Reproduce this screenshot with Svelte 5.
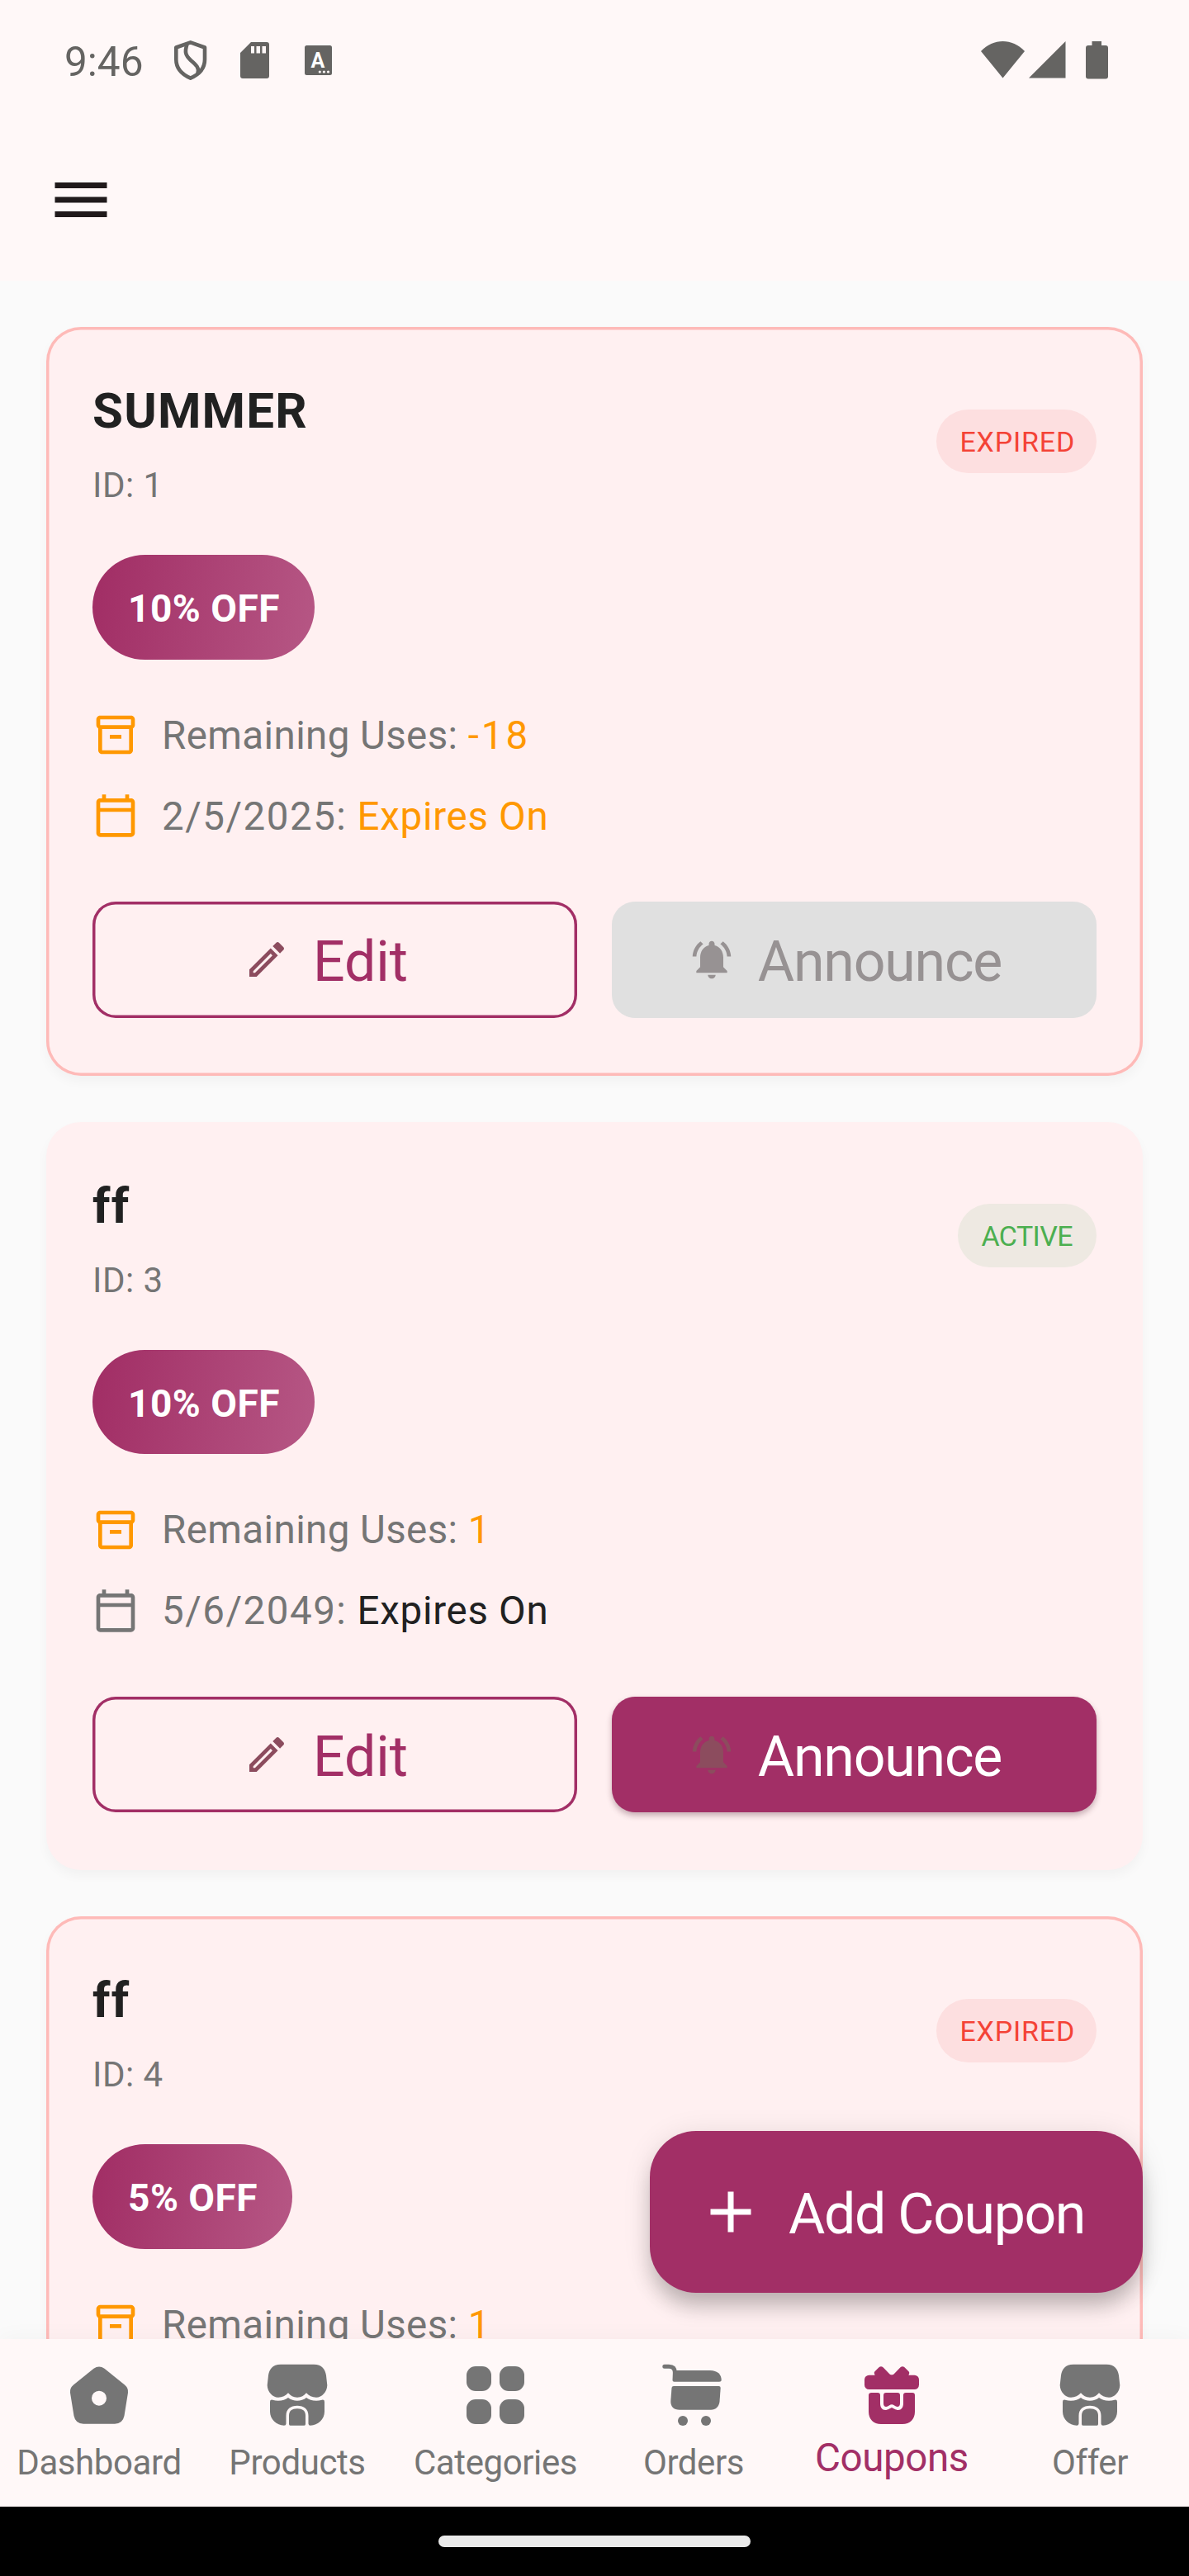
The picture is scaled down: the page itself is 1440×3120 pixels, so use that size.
<script>
  const coupons = [
    { code: 'SUMMER', id: 1, discount: 10, uses: '-18', date: '2/5/2025', expired: true },
    { code: 'ff', id: 3, discount: 10, uses: '1', date: '5/6/2049', expired: false },
    { code: 'ff', id: 4, discount: 5, uses: '1', date: '5/6/2049', expired: true },
  ];
  const tabs = ['Dashboard', 'Products', 'Categories', 'Orders', 'Coupons', 'Offer'];
  const current = 'Coupons';
</script>

{#snippet store()}
  <path d="M22 4.7H62C72 4.7 76 11 77 18L78.3 30C78 38 72 44.7 65 44.7C60 44.7 56 42.8 53 39.3C50 42.8 47 44.7 42 44.7S34 42.8 31 39.3C28 42.8 24 44.7 19 44.7C12 44.7 6 38 5.7 30L7 18C8 11 12 4.7 22 4.7Z" />
  <path d="M9 50Q9 47.2 12 47.7C20 50 27 48 31 45C37 50 47 50 53 45C57 48 64 50 72 47.7Q75 47.2 75 50V62C75 71 67 78.7 58 78.7Q55.5 78.7 55.5 76.5V67C55.5 58.5 50 54.7 42 54.7S28.5 58.5 28.5 67V76.5Q28.5 78.7 26 78.7C17 78.7 9 71 9 62Z" />
  <path d="M32 77V67C32 61 35.5 58.3 42 58.3S52 61 52 67V77Q52 78.7 50.5 78.7H33.5Q32 78.7 32 77Z" />
{/snippet}

<div class="screen">
  <header class="top">
    <div class="status">
      <span class="time">9:46</span>
      <svg class="shield" viewBox="212 49 40 48">
        <path d="M231.7 51.4L249 57.5V72C249 82 242.5 90 231.7 94.6C221 90 214.3 82 214.3 72V57.5Z" />
        <path d="M227.5 53.5C224.5 63 225.5 67 232 73C239 79 242.5 82 240.5 89" />
      </svg>
      <svg class="sd" viewBox="0 0 35 44">
        <path fill-rule="evenodd" d="M13 0H32Q35 0 35 3V41Q35 44 32 44H3Q0 44 0 41V13ZM13 5V13.5H17V5ZM19.5 5V13.5H24V5ZM26.5 5V13.5H31V5Z" />
      </svg>
      <svg class="lang" viewBox="0 0 33 36">
        <rect width="33" height="36" rx="2.5" />
        <text x="16" y="27" text-anchor="middle">A</text>
        <circle cx="18.3" cy="32" r="1.6" /><circle cx="23.4" cy="32" r="1.6" /><circle cx="28.5" cy="32" r="1.6" />
      </svg>
      <span class="fill"></span>
      <svg class="wifi" viewBox="0 0 53 45"><path d="M26.5 44.5L0 12C15 -4 38 -4 53 12Z" /></svg>
      <svg class="signal" viewBox="0 0 45 45"><path d="M44.5 0V44.5H0Z" /></svg>
      <svg class="battery" viewBox="0 0 27 46"><path d="M7.5 0H19V5H24Q27 5 27 8V42.5Q27 45.5 24 45.5H3Q0 45.5 0 42.5V8Q0 5 3 5H7.5Z" /></svg>
    </div>
    <div class="appbar">
      <svg class="menu" viewBox="0 0 24 24"><path d="M3 18h18v-2H3v2zm0-5h18v-2H3v2zm0-7v2h18V6H3z" /></svg>
    </div>
  </header>

  <main class="list">
    {#each coupons as c (c.id)}
      <article class="card" class:expired={c.expired}>
        <div class="head">
          <div class="names">
            <div class="code">{c.code}</div>
            <div class="id">ID: {c.id}</div>
          </div>
          <span class="badge" class:live={!c.expired}>{c.expired ? 'EXPIRED' : 'ACTIVE'}</span>
        </div>
        <div class="discount">{c.discount}% OFF</div>
        <div class="row">
          <svg class="orange" viewBox="0 0 24 24"><path d="M20 2H4c-1 0-2 .9-2 2v3.01c0 .72.43 1.34 1 1.69V20c0 1.1.9 2 2 2h14c1.1 0 2-.9 2-2V8.7c.57-.35 1-.97 1-1.69V4c0-1.1-1-2-2-2zm-1 18H5V9h14v11zm1-13H4V4h16v3zM9 12h6v2H9z" /></svg>
          <p>Remaining Uses: <b class="orange uses">{c.uses}</b></p>
        </div>
        <div class="row">
          <svg class:orange={c.expired} viewBox="0 0 24 24"><path d="M20 3h-1V1h-2v2H7V1H5v2H4c-1.1 0-2 .9-2 2v16c0 1.1.9 2 2 2h16c1.1 0 2-.9 2-2V5c0-1.1-.9-2-2-2zm0 18H4V10h16v11zm0-13H4V5h16v3z" /></svg>
          <p><span class="date">{c.date}:</span> <b class:orange={c.expired}>Expires On</b></p>
        </div>
        <div class="actions">
          <button class="edit">
            <svg viewBox="0 0 24 24"><path d="M14.06 9.02l.92.92L5.92 19H5v-.92l9.06-9.06M17.66 3c-.25 0-.51.1-.7.29l-1.83 1.83 3.75 3.75 1.83-1.83c.39-.39.39-1.02 0-1.41l-2.34-2.34c-.2-.2-.45-.29-.71-.29zm-3.6 3.19L3 17.25V21h3.75L17.81 9.94l-3.75-3.75z" /></svg>
            <span>Edit</span>
          </button>
          <button class="announce" disabled={c.expired}>
            <svg viewBox="0 0 24 24"><path d="M7.58 4.08L6.15 2.65C3.75 4.48 2.17 7.3 2.03 10.5h2c.15-2.65 1.51-4.97 3.55-6.42zm12.39 6.42h2c-.15-3.2-1.73-6.02-4.12-7.85l-1.42 1.43c2.02 1.45 3.39 3.77 3.54 6.42zM18 11c0-3.07-1.64-5.64-4.5-6.32V4c0-.83-.67-1.5-1.5-1.5s-1.5.67-1.5 1.5v.68C7.63 5.36 6 7.92 6 11v5l-2 2v1h16v-1l-2-2v-5zm-6 11c.14 0 .27-.01.4-.04.65-.14 1.18-.58 1.44-1.18.1-.24.15-.5.15-.78h-4c.01 1.1.9 2 2.01 2z" /></svg>
            <span>Announce</span>
          </button>
        </div>
      </article>
    {/each}
  </main>

  <button class="fab">
    <svg viewBox="0 0 24 24"><path d="M19 13h-6v6h-2v-6H5v-2h6V5h2v6h6v2z" /></svg>
    <span>Add Coupon</span>
  </button>

  <nav class="tabs">
    {#each tabs as t}
      <a class="tab" class:current={t === current} href="#{t}">
        <svg viewBox="0 0 84 84">
          {#if t === 'Dashboard'}
            <path fill-rule="evenodd" d="M35.5 9.8Q42 5.3 48.5 9.8L73 29.5Q77.7 33.5 77 39L72.5 67Q70.5 76.7 61 76.7H23Q13.5 76.7 11.5 67L7 39Q6.3 33.5 11 29.5ZM42 36.7a9 9 0 1 0 0 18a9 9 0 1 0 0-18Z" />
          {:else if t === 'Categories'}
            <rect x="7" y="7" width="30" height="30" rx="11" /><rect x="47" y="7" width="30" height="30" rx="11" />
            <rect x="7" y="47" width="30" height="30" rx="11" /><rect x="47" y="47" width="30" height="30" rx="11" />
          {:else if t === 'Orders'}
            <path class="line" d="M6.8 7.3H12C17 7.3 19.500 10 19.500 15" />
            <path d="M17 12H62C71 12 75.7 17 75.7 23.5Q75.7 25.7 73 25.7H18.5Q16.5 25.7 16.5 24Z" />
            <path d="M18 31H72.5Q74.7 31 74.7 33L73.5 50C72.5 56 69 59.7 63 59.7H25C18 59.7 14 56 14.3 49L15.5 33Q15.7 31 18 31Z" />
            <circle cx="29" cy="73" r="6" /><circle cx="57" cy="73" r="6" />
          {:else if t === 'Coupons'}
            <path d="M22 19L20.8 15.5Q20.5 14.3 21.5 13.3L26.5 8.3Q29 6 31.5 8.3L39.5 16.5Q42 18.7 44.5 16.5L52.5 8.3Q55 6 57.5 8.3L62.5 13.3Q63.5 14.3 63.2 15.5L62 19Z" />
            <rect x="9" y="17.7" width="66" height="17.3" rx="5.5" />
            <path d="M17.5 39H25Q28 39 28 42V52C28 59 33 62 39 58.5L42 57L45 58.5C51 62 56 59 56 52V42Q56 39 59 39H67Q70 39 70 42V62C70 71 64 77 55 77H29C20 77 14 71 14 62V42Q14 39 17.5 39Z" />
            <path d="M35 39H49Q52 39 52 42V52C52 55.5 49.5 57 46.5 55.3L43.5 53.6Q42 53 40.5 53.6L37.5 55.3C34.5 57 32 55.5 32 52V42Q32 39 35 39Z" />
          {:else}
            {@render store()}
          {/if}
        </svg>
        <span>{t}</span>
      </a>
    {/each}
  </nav>
  <div class="gesture"><i></i></div>
</div>

<style>
  :global(body) { margin: 0; }
  .screen {
    position: relative; width: 1440px; height: 3120px; overflow: hidden;
    display: flex; flex-direction: column; background: #fafafa;
    font-family: Roboto, "Noto Sans", sans-serif; color: #757575;
  }
  svg { display: block; flex: none; fill: currentColor; }
  button { font: inherit; border: 0; margin: 0; padding: 0; }

  .top { height: 340px; flex: none; background: #fff8f8; }
  .status {
    height: 145px; padding: 0 98px 0 78px; box-sizing: border-box;
    display: flex; align-items: center; color: #656462;
  }
  .time { width: 133px; font-size: 49.5px; line-height: 60px; padding-top: 4px; }
  .fill { flex: 1; }
  .shield { width: 40px; height: 48px; fill: none; stroke: currentColor; stroke-width: 4.6; stroke-linejoin: round; }
  .sd { width: 35px; height: 44px; margin-left: 40px; }
  .lang { width: 33px; height: 36px; margin-left: 43px; }
  .lang text { font: 700 25px Roboto, sans-serif; fill: #fff; }
  .lang circle { fill: #fff8f8; }
  .wifi { width: 53px; height: 45px; }
  .signal { width: 45px; height: 45px; margin-left: 5px; }
  .battery { width: 27px; height: 46px; margin-left: 24px; }
  .appbar { height: 194px; display: flex; align-items: center; padding: 0 56px; box-sizing: border-box; }
  .menu { width: 84px; height: 84px; color: #201a1b; }

  .list {
    flex: 1; min-height: 0; overflow: hidden; padding: 56px 56px 0;
    display: flex; flex-direction: column; gap: 56px;
  }
  .card {
    flex: none; height: 906.5px; box-sizing: border-box; padding: 56px; border-radius: 42px;
    background: #fff0f1; box-shadow: 0 7px 14px rgba(0, 0, 0, .035);
  }
  .card.expired { box-shadow: inset 0 0 0 3.5px #febab8, 0 7px 14px rgba(0, 0, 0, .035); }
  .head { height: 164px; display: flex; justify-content: space-between; align-items: center; }
  .names { align-self: flex-start; }
  .code { font-size: 60px; line-height: 91px; font-weight: 700; letter-spacing: 1.2px; color: #212121; }
  .id { font-size: 42px; line-height: 71px; padding-top: 9px; letter-spacing: .5px; }
  .badge {
    height: 77px; line-height: 79px; padding: 0 26px 0 28px; border-radius: 39px;
    font-size: 34px; letter-spacing: .8px; color: #f44336; background: #fddfe0;
  }
  .badge.live { color: #4caf50; background: #eee9e2; letter-spacing: -.6px; padding-right: 29px; }
  .discount {
    width: max-content; height: 126.5px; box-sizing: border-box; margin: 56px 0 49.5px;
    padding: 5px 42px 0 43px; line-height: 121.5px; border-radius: 64px;
    background: linear-gradient(100deg, #a22f66 5%, #b55583 95%);
    color: #fff; font-size: 46px; font-weight: 700; letter-spacing: .5px;
  }
  .row { height: 84px; display: flex; align-items: center; gap: 28px; }
  .row + .row { margin-top: 14px; }
  .row svg { width: 56px; height: 56px; }
  .row p { margin: 0; font-size: 47.5px; line-height: 84px; padding-top: 1px; letter-spacing: .4px; }
  .row .date { letter-spacing: 1.5px; }
  .row b { font-weight: 440; color: #212121; letter-spacing: .7px; }
  .row .uses { letter-spacing: 3px; }
  .row .orange { color: #ff9800; }
  .actions { display: grid; grid-template-columns: 1fr 1fr; gap: 42px; margin-top: 62px; }
  .actions button {
    height: 140.5px; box-sizing: border-box; border-radius: 28px;
    display: flex; align-items: center; justify-content: center; gap: 28px;
    font-size: 68px; line-height: 80px; padding-right: 22px;
  }
  .actions svg { width: 56px; height: 56px; color: #8c4c5e; }
  .actions span, .fab span { padding-top: 6px; }
  .actions .edit { background: none; box-shadow: inset 0 0 0 3.5px #a22f66; color: #a22f66; }
  .announce { background: #a22f66; color: #fff; letter-spacing: -1.2px; box-shadow: 0 4px 7px rgba(70, 20, 40, .3); }
  .announce:disabled { background: #e0e0e0; box-shadow: none; color: #979293; }
  .announce:disabled svg { color: #979293; }

  .fab {
    position: absolute; right: 56px; top: 2581px; width: 597px; height: 196px;
    box-sizing: border-box; padding-left: 56px; border-radius: 56px;
    display: flex; align-items: center; gap: 28px;
    background: #a22f66; color: #fff; font-size: 68px; line-height: 80px; letter-spacing: -1.4px;
    box-shadow: 0 20px 26px -4px rgba(0, 0, 0, .22), 0 4px 34px rgba(0, 0, 0, .1);
  }
  .fab svg { width: 84px; height: 84px; }

  .tabs {
    position: relative; flex: none; height: 203px; display: grid; grid-template-columns: repeat(6, 1fr);
    background: #fff8f8; box-shadow: 0 -3px 24px rgba(0, 0, 0, .03);
  }
  .tab {
    display: flex; flex-direction: column; align-items: center; padding-top: 26px;
    color: #757575; text-decoration: none; font-size: 42px; letter-spacing: -.4px;
  }
  .tab svg { width: 84px; height: 84px; }
  .tab span { line-height: 50px; padding-top: 15px; }
  .tab.current { color: #a22f66; font-size: 47.5px; font-weight: 440; }
  .tab.current span { padding-top: 9px; }
  .line { fill: none; stroke: currentColor; stroke-width: 5; stroke-linecap: round; }
  .gesture { flex: none; height: 84px; background: #000; display: flex; justify-content: center; align-items: center; }
  .gesture i { width: 378px; height: 14px; border-radius: 7px; background: #eaeaea; }
</style>
